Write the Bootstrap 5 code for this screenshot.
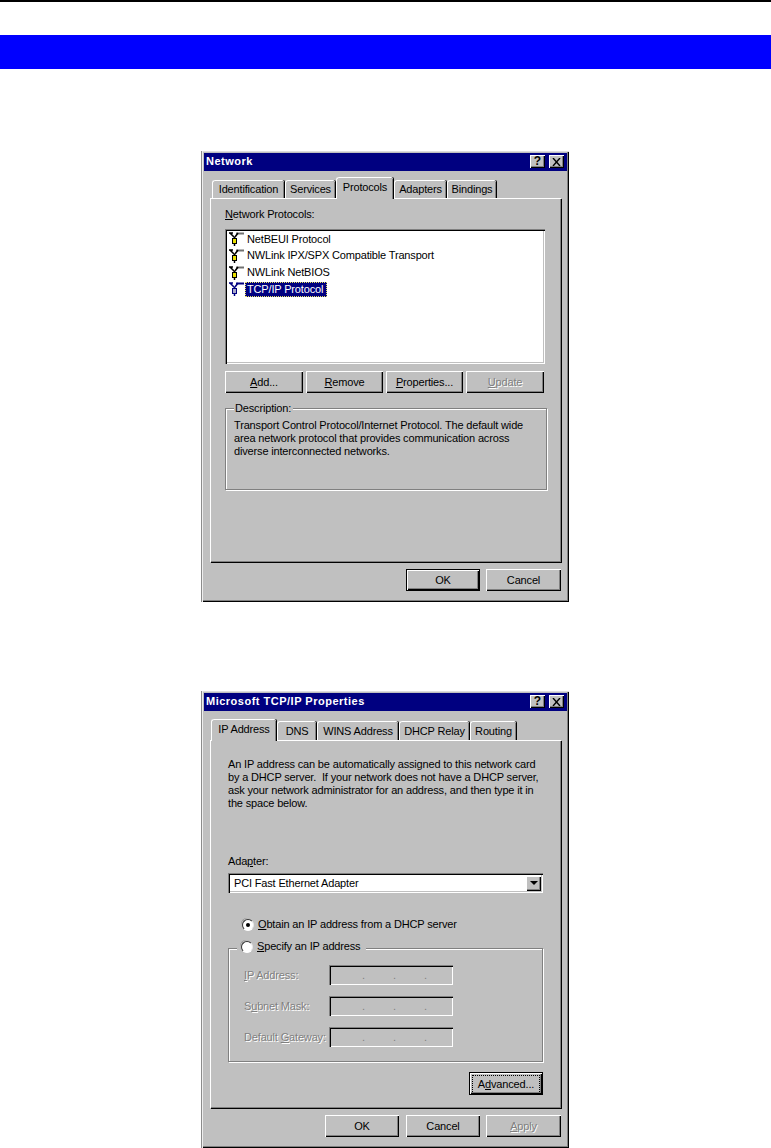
<!DOCTYPE html>
<html lang="en">
<head>
    <meta charset="UTF-8">
    <meta name="viewport" content="width=device-width, initial-scale=1.0">
    <title>TCP/IP settings</title>
    <link href="https://cdn.jsdelivr.net/npm/bootstrap@5.3.0/dist/css/bootstrap.min.css" rel="stylesheet">
    <style>
        body {
            background-color: #fff;
            color: #000;
            font-family: "Liberation Sans", Arial, sans-serif;
            font-size: 11px;
            line-height: 13px;
            letter-spacing: -.16px;
        }
        .top-rule { height: 2px; background-color: #000; }
        .blue-band { height: 34px; margin-top: 33px; background-color: #00f; }

        /* dialog frame */
        .win-box {
            width: 368px;
            margin-left: 201px;
            padding: 2px 2px 2px 3px;
            background-color: #c0c0c0;
            box-shadow: inset 1px 0 0 #8c8c8c, inset 2px 0 0 #eee, inset 0 1px 0 #ddd, inset -1px -1px 0 #000, inset -2px -2px 0 #808080;
        }
        .box-one { margin-top: 82px; }
        .box-two { margin-top: 89px; }
        .win-title {
            height: 18px;
            padding: 0 3px 1px 2px;
            background-color: #000080;
            color: #fff;
            font-weight: 700;
            letter-spacing: .5px;
        }
        .title-btn {
            width: 15px;
            height: 13px;
            background-color: #c0c0c0;
            color: #000;
            font-size: 12px;
            letter-spacing: 0;
            box-shadow: inset 1px 1px 0 #fff, inset -1px -1px 0 #000, inset -2px -2px 0 #808080;
        }

        /* tabs */
        .win-tabs { margin-left: 8px; width: 351px; flex-wrap: nowrap; align-items: flex-end; }
        .box-one .win-tabs { height: 27px; }
        .box-two .win-tabs { height: 29px; margin-left: 7px; }
        .win-tab {
            height: 18px;
            display: flex;
            align-items: center;
            justify-content: center;
            background-color: #c0c0c0;
            border-top: 1px solid #fff;
            border-left: 1px solid #fff;
            border-top-left-radius: 3px;
            border-top-right-radius: 2px;
            box-shadow: inset -1px 0 0 #808080, 1px 0 0 #000;
            margin-right: 1px;
        }
        .win-tab.is-on {
            height: 22px;
            margin-bottom: -1px;
            padding-bottom: 3px;
            position: relative;
            z-index: 2;
        }
        .box-two .win-tab { height: 19px; }
        .box-two .win-tab.is-on { height: 22px; }
        .tw-73 { width: 72px; } .tw-51 { width: 50px; } .tw-58 { width: 57px; } .tw-53 { width: 52px; } .tw-50 { width: 49px; }
        .tw-66 { width: 65px; } .tw-40 { width: 39px; } .tw-82 { width: 81px; } .tw-71 { width: 70px; } .tw-47 { width: 46px; }

        .win-panel {
            width: 351px;
            margin-left: 6px;
            position: relative;
            border-top: 1px solid #fff;
            border-left: 1px solid #fff;
            box-shadow: inset -1px -1px 0 #808080, 1px 1px 0 #000;
        }
        .panel-one { height: 364px; padding: 9px 0 0 14px; }
        .panel-two { height: 368px; padding: 17px 0 0 17px; }

        /* list */
        .sunken {
            background-color: #fff;
            box-shadow: inset 1px 1px 0 #808080, inset 2px 2px 0 #000, inset -1px -1px 0 #fff, inset -2px -2px 0 #c0c0c0;
        }
        .proto-list { width: 320px; height: 135px; margin-top: 8px; padding: 2px 2px 0 3px; }
        .proto-row { height: 16.67px; gap: 1px; }
        .proto-icon { width: 16px; height: 16px; flex-shrink: 0; }
        .ic-plain { --ic-line: #707070; --ic-dark: #000; --ic-fill: #e8e000; }
        .ic-sel { --ic-line: #000080; --ic-dark: #000080; --ic-fill: #a8a8c8; }
        .proto-name { padding: 1px 4px 1px 2px; height: 15px; line-height: 13px; }
        .proto-name.is-sel { background-color: #000080; color: #fff; outline: 1px dotted #e8e060; outline-offset: -1px; }

        /* buttons */
        .win-btn {
            height: 22px;
            padding: 0;
            border: 0;
            border-radius: 0;
            background-color: #c0c0c0;
            color: #000;
            font-size: 11px;
            line-height: 13px;
            letter-spacing: -.16px;
            box-shadow: inset 1px 1px 0 #fff, inset -1px -1px 0 #000, inset -2px -2px 0 #808080;
        }
        .win-btn:disabled { background-color: #c0c0c0; color: #808080; opacity: 1; text-shadow: 1px 1px 0 #fff; }
        .win-btn.is-default { outline: 1px solid #000; outline-offset: -1px; box-shadow: inset 2px 2px 0 #fff, inset -2px -2px 0 #000, inset -3px -3px 0 #808080; }
        .btn-row { gap: 3px; margin-top: 7px; }
        .bw-77 { width: 77px; } .bw-78 { width: 78px; } .bw-74 { width: 74px; } .bw-75 { width: 75px; }
        .win-foot { gap: 6px; padding: 7px 6px 9px 0; }
        .foot-first { margin-right: 1px; }

        /* group boxes */
        .win-group {
            position: relative;
            border: 1px solid #808080;
            box-shadow: inset 1px 1px 0 #fff, 1px 1px 0 #fff;
        }
        .desc-group { width: 322px; height: 82px; margin-top: 15px; padding: 10px 9px 0 8px; }
        .group-legend { position: absolute; top: -7px; left: 8px; padding: 0 2px 0 1px; background-color: #c0c0c0; }

        /* tcp/ip page */
        .adapter-label { margin-top: 45px; }
        .adapter-box { width: 315px; height: 20px; margin-top: 5px; padding: 2px 2px 2px 6px; }
        .drop-arrow {
            width: 15px;
            height: 15px;
            background-color: #c0c0c0;
            box-shadow: inset 1px 1px 0 #fff, inset -1px -1px 0 #000, inset -2px -2px 0 #808080;
        }
        .drop-arrow::after { content: ""; border: 4px solid transparent; border-top: 4px solid #000; border-bottom: 0; }
        .radio-row { margin-left: 14px; margin-top: 25px; gap: 4px; }
        .win-radio {
            width: 12px;
            height: 12px;
            flex-shrink: 0;
            border-radius: 50%;
            background-color: #fff;
            border: 1px solid;
            border-color: #333 #e8e8e8 #fff #333;
            box-shadow: 0 0 0 1px #c0c0c0, -1px -1px 0 #808080;
        }
        .win-radio.is-on::after { content: ""; width: 4px; height: 4px; border-radius: 50%; background-color: #000; }
        .ip-group { width: 315px; height: 114px; margin-top: 17px; padding: 16px 0 0 15px; }
        .ip-legend { position: absolute; top: -9px; left: 8px; padding: 0 6px 0 4px; gap: 4px; background-color: #c0c0c0; }
        .ip-fields { gap: 11px; }
        .ip-name { width: 85px; color: #808080; text-shadow: 1px 1px 0 #fff; white-space: nowrap; }
        .ip-box {
            width: 124px;
            height: 20px;
            padding: 4px 26px 0 33px;
            color: #808080;
            box-shadow: inset 1px 1px 0 #808080, inset 2px 2px 0 #000, inset -1px -1px 0 #fff, inset -2px -2px 0 #c0c0c0;
        }
        .adv-row { width: 315px; margin-top: 10px; }
        .adv-btn { width: 74px; height: 23px; }
        .adv-btn span { display: block; margin: 3px; padding: 2px 0; border: 1px dotted #000; }
    </style>
</head>
<body>
    <svg width="0" height="0" class="position-absolute">
        <symbol id="proto" viewBox="0 0 16 16">
            <path d="M8 2.5h8" stroke="var(--ic-line)" stroke-width="2" fill="none"/>
            <path d="M1 2h4M2 2l4 4M10 2L7 6M6.5 6v2" stroke="var(--ic-dark)" fill="none" stroke-width="1.6"/>
            <rect x="4.5" y="7.5" width="4" height="5" fill="var(--ic-fill)" stroke="var(--ic-dark)"/>
            <path d="M6.5 12v3" stroke="var(--ic-dark)" stroke-width="1.5"/>
        </symbol>
    </svg>

    <div class="top-rule"></div>
    <div class="blue-band"></div>

    <div class="win-box box-one">
        <div class="win-title d-flex align-items-center justify-content-between">
            <span>Network</span>
            <div class="d-flex gap-1">
                <span class="title-btn d-flex align-items-center justify-content-center">?</span>
                <span class="title-btn d-flex align-items-center justify-content-center"><svg width="9" height="8" viewBox="0 0 9 8"><path d="M1 0l7 8M8 0L1 8" stroke="#000" stroke-width="1.4"/></svg></span>
            </div>
        </div>
        <div class="nav win-tabs">
            <div class="win-tab tw-73">Identification</div>
            <div class="win-tab tw-51">Services</div>
            <div class="win-tab is-on tw-58">Protocols</div>
            <div class="win-tab tw-53">Adapters</div>
            <div class="win-tab tw-50">Bindings</div>
        </div>
        <div class="win-panel panel-one">
            <div><u>N</u>etwork Protocols:</div>
            <div class="proto-list sunken">
                <div class="proto-row d-flex align-items-center"><svg class="proto-icon ic-plain"><use href="#proto"/></svg><span class="proto-name">NetBEUI Protocol</span></div>
                <div class="proto-row d-flex align-items-center"><svg class="proto-icon ic-plain"><use href="#proto"/></svg><span class="proto-name">NWLink IPX/SPX Compatible Transport</span></div>
                <div class="proto-row d-flex align-items-center"><svg class="proto-icon ic-plain"><use href="#proto"/></svg><span class="proto-name">NWLink NetBIOS</span></div>
                <div class="proto-row d-flex align-items-center"><svg class="proto-icon ic-sel"><use href="#proto"/></svg><span class="proto-name is-sel">TCP/IP Protocol</span></div>
            </div>
            <div class="d-flex btn-row">
                <button class="btn win-btn bw-78"><u>A</u>dd...</button>
                <button class="btn win-btn bw-77"><u>R</u>emove</button>
                <button class="btn win-btn bw-77"><u>P</u>roperties...</button>
                <button class="btn win-btn bw-78" disabled><u>U</u>pdate</button>
            </div>
            <div class="win-group desc-group">
                <span class="group-legend">Description:</span>
                Transport Control Protocol/Internet Protocol. The default wide area network protocol that provides communication across diverse interconnected networks.
            </div>
        </div>
        <div class="d-flex justify-content-end win-foot">
            <button class="btn win-btn is-default bw-74">OK</button>
            <button class="btn win-btn bw-75">Cancel</button>
        </div>
    </div>

    <div class="win-box box-two">
        <div class="win-title d-flex align-items-center justify-content-between">
            <span>Microsoft TCP/IP Properties</span>
            <div class="d-flex gap-1">
                <span class="title-btn d-flex align-items-center justify-content-center">?</span>
                <span class="title-btn d-flex align-items-center justify-content-center"><svg width="9" height="8" viewBox="0 0 9 8"><path d="M1 0l7 8M8 0L1 8" stroke="#000" stroke-width="1.4"/></svg></span>
            </div>
        </div>
        <div class="nav win-tabs">
            <div class="win-tab is-on tw-66">IP Address</div>
            <div class="win-tab tw-40">DNS</div>
            <div class="win-tab tw-82">WINS Address</div>
            <div class="win-tab tw-71">DHCP Relay</div>
            <div class="win-tab tw-47">Routing</div>
        </div>
        <div class="win-panel panel-two">
            <div>An IP address can be automatically assigned to this network card<br>by a DHCP server.&nbsp; If your network does not have a DHCP server,<br>ask your network administrator for an address, and then type it in<br>the space below.</div>
            <div class="adapter-label">Ada<u>p</u>ter:</div>
            <div class="adapter-box sunken d-flex align-items-center justify-content-between">
                <span>PCI Fast Ethernet Adapter</span>
                <span class="drop-arrow d-flex align-items-center justify-content-center"></span>
            </div>
            <div class="radio-row d-flex align-items-center">
                <span class="win-radio is-on d-flex align-items-center justify-content-center"></span>
                <span><u>O</u>btain an IP address from a DHCP server</span>
            </div>
            <div class="win-group ip-group">
                <div class="ip-legend d-flex align-items-center">
                    <span class="win-radio"></span>
                    <span><u>S</u>pecify an IP address</span>
                </div>
                <div class="d-flex flex-column ip-fields">
                    <div class="d-flex align-items-center"><span class="ip-name"><u>I</u>P Address:</span><span class="ip-box d-flex justify-content-between"><i class="fst-normal">.</i><i class="fst-normal">.</i><i class="fst-normal">.</i></span></div>
                    <div class="d-flex align-items-center"><span class="ip-name">S<u>u</u>bnet Mask:</span><span class="ip-box d-flex justify-content-between"><i class="fst-normal">.</i><i class="fst-normal">.</i><i class="fst-normal">.</i></span></div>
                    <div class="d-flex align-items-center"><span class="ip-name">Default <u>G</u>ateway:</span><span class="ip-box d-flex justify-content-between"><i class="fst-normal">.</i><i class="fst-normal">.</i><i class="fst-normal">.</i></span></div>
                </div>
            </div>
            <div class="d-flex justify-content-end adv-row">
                <button class="btn win-btn is-default adv-btn"><span>A<u>d</u>vanced...</span></button>
            </div>
        </div>
        <div class="d-flex justify-content-end win-foot">
            <button class="btn win-btn bw-74 foot-first">OK</button>
            <button class="btn win-btn bw-74">Cancel</button>
            <button class="btn win-btn bw-75" disabled><u>A</u>pply</button>
        </div>
    </div>
</body>
</html>
